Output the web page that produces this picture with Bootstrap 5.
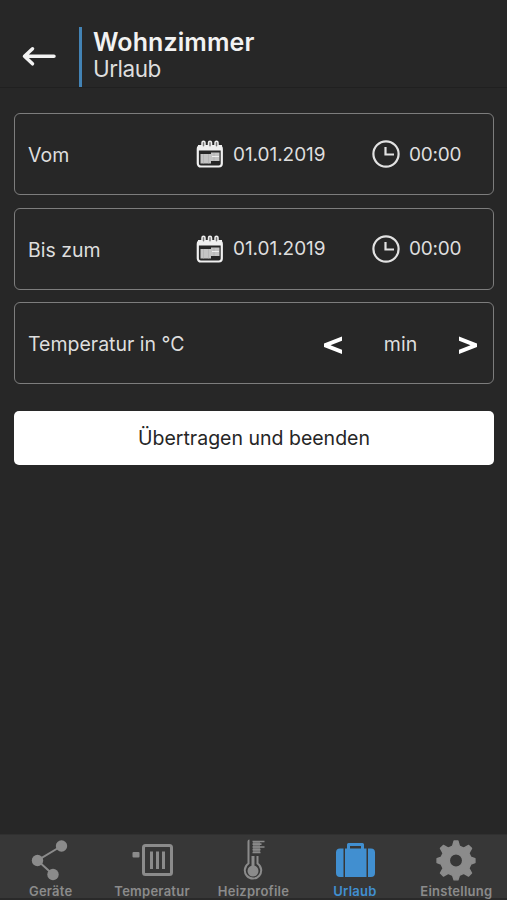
<!DOCTYPE html>
<html lang="de">
<head>
<meta charset="utf-8">
<meta name="viewport" content="width=device-width, initial-scale=1">
<title>Wohnzimmer – Urlaub</title>
<link rel="stylesheet" href="https://cdn.jsdelivr.net/npm/bootstrap@5.3.0/dist/css/bootstrap.min.css">
<style>
body{background:#272727;color:#dedede;font-family:Inter,"Liberation Sans",sans-serif;font-size:19.5px;line-height:24px;overflow:hidden}
.app-head{height:88px;border-bottom:1px solid #202020;padding:27px 0 0 22px}
.back-link{width:57px;height:60px;color:#f2f2f2;padding-top:19px}
.head-title{border-left:3px solid #4383b5;height:60px;padding:1px 0 0 11px}
.head-title h1{font-size:25px;line-height:28px;font-weight:600;color:#f2f2f2;letter-spacing:.1px}
.head-title p{font-size:22.5px;line-height:26px;letter-spacing:-.5px}
.screen{padding:25px 13px 0 14px}
.setting{height:82px;border:1px solid #7d7d7d;border-radius:6px;margin-bottom:12.5px;padding:0 13px}
.setting > span{padding-top:2px}
.picker{color:#dedede;font-size:19px;letter-spacing:-.05px;text-decoration:none}
.picker span{padding:1px 0 0 1px}
.date-picker{width:176px}
.time-picker{width:108px}
.time-picker span{letter-spacing:-.25px}
.min-value{width:115px}
.step{color:#fff;line-height:0;padding-top:3px}
.step:last-child{margin-right:2px}
.send{height:54px;margin-top:14px;border-radius:5px;background:#fff;color:#262626;font-size:19.5px;padding:3px 0 0}
.send:hover{background:#eee}
.tabs{height:66px;background:#373737;border-top:1px solid #303030;border-bottom:2px solid #292929}
.tabs a{color:#8b8b8b;font-size:13px;line-height:16px;font-weight:600;letter-spacing:.25px;padding-top:3px;text-decoration:none}
.tabs a.current{color:#418fd0}
.tabs svg{width:44px;height:44px;margin-bottom:1px}
</style>
<script src="https://cdn.jsdelivr.net/npm/bootstrap@5.3.0/dist/js/bootstrap.bundle.min.js"></script>
</head>
<body>
<svg class="d-none">
  <symbol id="calendar" viewBox="0 0 28 28">
    <rect x="1.800" y="6" width="24" height="20.500" rx="3" fill="none" stroke="#f0f0f0" stroke-width="2.200"/>
    <path d="M2 5h24v5.500H2z" fill="#f0f0f0"/>
    <g fill="#777" stroke="#f0f0f0" stroke-width="1.500"><rect x="6" y="1.200" width="3" height="6" rx="1.500"/><rect x="12.500" y="1.200" width="3" height="6" rx="1.500"/><rect x="19" y="1.200" width="3" height="6" rx="1.500"/></g>
    <path d="M4.500 14H15v-1.500h8.500V21H15v2.500H4.500z" fill="#c4c4c4"/>
    <path d="M7.500 14v9.500M12.500 14v9.500M18 13v8" stroke="#adadad" stroke-width=".6"/>
    <path d="M16 16.500h7" stroke="#eee" stroke-width="1"/>
  </symbol>
  <symbol id="clock" viewBox="0 0 28 28"><circle cx="14" cy="14" r="12.600" fill="none" stroke="#e2e2e2" stroke-width="2.200"/><path d="M13.500 7v7.500H22" fill="none" stroke="#e2e2e2" stroke-width="2.200"/></symbol>
</svg>
<div class="d-flex flex-column vh-100">
  <header class="app-head d-flex">
    <a class="back-link" href="#" aria-label="Zurück"><svg class="d-block" width="35" height="22" viewBox="0 0 35 22" fill="none" stroke="currentColor" stroke-width="3.500" stroke-linecap="round" stroke-linejoin="round"><path d="M32 10.300H2.500M10.500 2.800l-8 7.500 8 7.500"/></svg></a>
    <div class="head-title"><h1 class="m-0">Wohnzimmer</h1><p class="m-0">Urlaub</p></div>
  </header>
  <main class="screen flex-grow-1">
    <section class="setting d-flex align-items-center">
      <span class="me-auto">Vom</span>
      <a href="#" class="picker date-picker d-flex align-items-center"><svg class="me-2" width="28" height="28"><use href="#calendar"/></svg><span>01.01.2019</span></a>
      <a href="#" class="picker time-picker d-flex align-items-center"><svg class="me-2" width="28" height="28"><use href="#clock"/></svg><span>00:00</span></a>
    </section>
    <section class="setting d-flex align-items-center">
      <span class="me-auto">Bis zum</span>
      <a href="#" class="picker date-picker d-flex align-items-center"><svg class="me-2" width="28" height="28"><use href="#calendar"/></svg><span>01.01.2019</span></a>
      <a href="#" class="picker time-picker d-flex align-items-center"><svg class="me-2" width="28" height="28"><use href="#clock"/></svg><span>00:00</span></a>
    </section>
    <section class="setting d-flex align-items-center">
      <span class="me-auto">Temperatur in °C</span>
      <a href="#" class="step" aria-label="Weniger"><svg width="20" height="20" viewBox="0 0 20 20"><path d="M19 1.500v4.200L7.500 10.200 19 14.800V19L1 12V8.500z" fill="currentColor"/></svg></a>
      <span class="text-center min-value">min</span>
      <a href="#" class="step" aria-label="Mehr"><svg width="20" height="20" viewBox="0 0 20 20"><path d="M1 1.500v4.200l11.500 4.500L1 14.800V19l18-7V8.500z" fill="currentColor"/></svg></a>
    </section>
    <button class="send btn w-100 border-0">Übertragen und beenden</button>
  </main>
  <nav class="tabs row g-0 text-center">
    <a href="#" class="col d-flex flex-column align-items-center"><svg viewBox="0 0 44 44" fill="currentColor"><path d="m32.500 8-24 14.500 15.500 14" fill="none" stroke="currentColor" stroke-width="2"/><circle cx="32.500" cy="8" r="5.700"/><circle cx="8.500" cy="22.500" r="5.700"/><circle cx="24" cy="36.500" r="5.700"/></svg><span>Geräte</span></a>
    <a href="#" class="col d-flex flex-column align-items-center"><svg viewBox="0 0 44 44" fill="none" stroke="currentColor"><rect x="13.500" y="7.500" width="28" height="29" rx="2" stroke-width="3"/><path d="M21.500 13.500v17.500M27.500 13.500v17.500M33.500 13.500v17.500" stroke-width="3"/><rect x="2.500" y="14" width="7" height="5.500" rx="1" fill="currentColor" stroke="none"/></svg><span>Temperatur</span></a>
    <a href="#" class="col d-flex flex-column align-items-center"><svg viewBox="0 0 44 44" fill="none" stroke="currentColor"><path d="M16.500 26V3.500q0-1 1-1M16.500 25.500a8.200 8.200 0 1 0 9 0V18" stroke-width="2"/><path d="M21 18v14" stroke-width="3"/><circle cx="21" cy="33" r="5.500" fill="currentColor" stroke="none"/><path d="M20.500 3.500h12M20.500 6.200h9M20.500 9h12M20.500 11.700h8M20.500 14.500h8" stroke-width="1.700"/><path d="M24.500 3v12" stroke-width="7" opacity=".65"/></svg><span>Heizprofile</span></a>
    <a href="#" class="col d-flex flex-column align-items-center current" aria-current="page"><svg viewBox="0 0 44 44" fill="currentColor"><path d="M12 10.500h21.500V39H12zM10.500 10.500V39H7q-4 0-4-4V14.500q0-4 4-4zM35 10.500V39h3q4 0 4-4V14.500q0-4-4-4z"/><path d="M15.500 11V6.500h14V11" fill="none" stroke="currentColor" stroke-width="3" stroke-linejoin="round"/></svg><span>Urlaub</span></a>
    <a href="#" class="col d-flex flex-column align-items-center"><svg viewBox="-.7 .6 45.400 45.400" fill="currentColor"><path fill-rule="evenodd" stroke="currentColor" stroke-linejoin="round" stroke-width="1.500" d="M20 3.800h4l1.500 5.200 4.500 2 5-2.700 3 3-2.700 5 2 4.200 4.200 1.500v4l-4.200 1.500-2 4.300 2.700 5-3 3-5-2.700-4.500 2-1.500 4.700h-4l-1.500-4.700-4.500-2-5 2.700-3-3 2.700-5-2-4.300-4.200-1.500v-4l4.200-1.500 2-4.200-2.700-5 3-3 5 2.700 4.500-2zM22 17a6.900 6.900 0 1 0 0 13.800A6.900 6.900 0 1 0 22 17z"/></svg><span>Einstellung</span></a>
  </nav>
</div>
</body>
</html>
